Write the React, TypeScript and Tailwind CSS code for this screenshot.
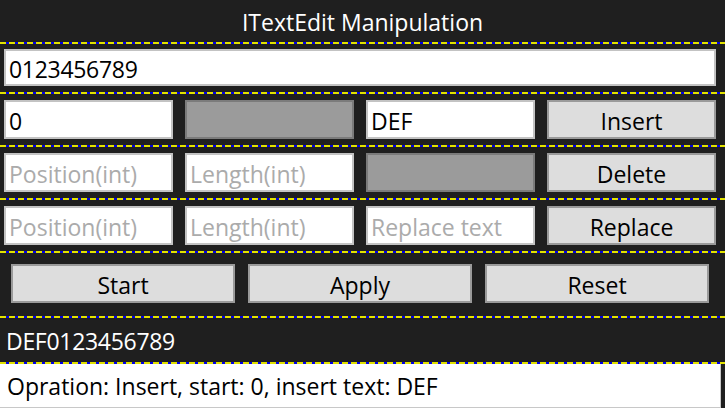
import React from "react";

const Dash = () => (
  <div className="h-[2px] w-full bg-[repeating-linear-gradient(90deg,#e2e200_0px,#e2e200_6px,#0000e6_6px,#0000e6_9px)]" />
);

const Field = ({ value, placeholder }: { value?: string; placeholder?: string }) => (
  <div className="h-[39px] bg-white border-2 border-[#c3c3c3] flex items-center pl-[3px] pt-[4px] text-black">
    {value ? value : <span className="text-[#ababab]">{placeholder}</span>}
  </div>
);

const Disabled = () => <div className="h-[39px] bg-[#9b9b9b] border-2 border-[#7b7b7b]" />;

const Btn = ({ label }: { label: string }) => (
  <button className="h-[39px] bg-[#dddddd] border-2 border-[#9a9a9a] flex items-center justify-center pt-[4px] text-black">
    {label}
  </button>
);

export default function App() {
  return (
    <div className="w-[725px] h-[408px] overflow-hidden bg-[#1f1f1f] font-['Open_Sans',sans-serif] text-[23px] leading-none">
      {/* Title */}
      <div className="h-[42px] flex items-center justify-center text-white pt-[2px]">ITextEdit Manipulation</div>
      <Dash />

      {/* Source text */}
      <div className="pl-1 pr-[9px] pt-[5px] pb-[6px]">
        <div className="h-[37px] bg-white border-2 border-[#c3c3c3] flex items-center pl-[3px] pt-[4px] text-black tracking-[-0.3px]">
          0123456789
        </div>
      </div>
      <Dash />

      {/* Insert */}
      <div className="grid grid-cols-4 gap-x-3 pl-1 pr-[9px] pt-[6px] pb-[6px]">
        <Field value="0" />
        <Disabled />
        <Field value="DEF" />
        <Btn label="Insert" />
      </div>
      <Dash />

      {/* Delete */}
      <div className="grid grid-cols-4 gap-x-3 pl-1 pr-[9px] pt-[6px] pb-[6px]">
        <Field placeholder="Position(int)" />
        <Field placeholder="Length(int)" />
        <Disabled />
        <Btn label="Delete" />
      </div>
      <Dash />

      {/* Replace */}
      <div className="grid grid-cols-4 gap-x-3 pl-1 pr-[9px] pt-[6px] pb-[6px]">
        <Field placeholder="Position(int)" />
        <Field placeholder="Length(int)" />
        <Field placeholder="Replace text" />
        <Btn label="Replace" />
      </div>
      <Dash />

      {/* Actions */}
      <div className="grid grid-cols-3 gap-x-[13px] pl-[11px] pr-4 pt-[11px] pb-[13px]">
        <Btn label="Start" />
        <Btn label="Apply" />
        <Btn label="Reset" />
      </div>
      <Dash />

      {/* Result */}
      <div className="h-[44px] flex items-center pl-[6px] pt-[2px] text-white tracking-[-0.3px]">DEF0123456789</div>
      <Dash />

      {/* Operation log */}
      <div className="h-[44px] w-[721px] bg-white border-r border-b border-[#c8c8c8] flex items-center pl-[7px] pt-[2px] text-black">
        Opration: Insert, start: 0, insert text: DEF
      </div>
    </div>
  );
}
